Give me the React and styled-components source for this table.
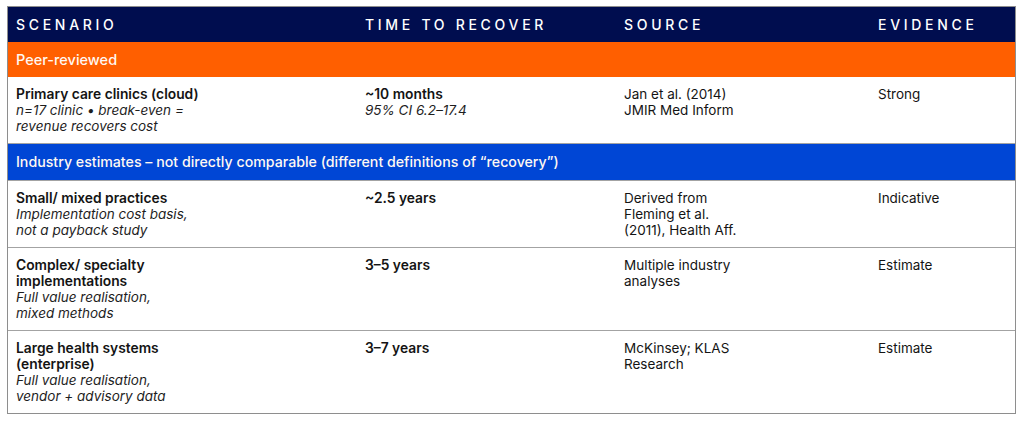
import React from "react";
import styled, { createGlobalStyle } from "styled-components";

const Global = createGlobalStyle`
  html, body { margin: 0; padding: 0; background: #ffffff; }
  body { font-family: Inter, "Noto Sans", Arial, sans-serif; color: #141414; }
`;

const Page = styled.div`
  padding: 6px 8px 0 7px;
`;

const Table = styled.div`
  width: 1009px;
  box-sizing: border-box;
  border: 1px solid #8e8e8e;
  display: flex;
  flex-direction: column;
`;

const Row = styled.div`
  display: grid;
  grid-template-columns: 349px 259px 254px 1fr;
  background: ${(p) => p.$bg || "#ffffff"};
  border-bottom: ${(p) => (p.$divider ? "1px solid #a3a3a3" : "none")};
  min-height: ${(p) => p.$minH || 0}px;
  box-sizing: border-box;
`;

const HeadCell = styled.div`
  padding: 9px 8px 9px;
  font-size: 14px;
  line-height: 17px;
  font-weight: 500;
  letter-spacing: 3.7px;
  color: #ffffff;
  text-transform: uppercase;
`;

const Band = styled.div`
  background: ${(p) => p.$bg};
  color: #fff8f2;
  font-size: ${(p) => p.$fs || 14.5}px;
  line-height: 17px;
  font-weight: 500;
  padding: 9px 8px 9px;
  height: ${(p) => p.$h}px;
  box-sizing: border-box;
  border-bottom: ${(p) => (p.$divider ? "1px solid #a3a3a3" : "none")};
`;

const Cell = styled.div`
  padding: 9px 8px 9px;
  font-size: 13.5px;
  line-height: 16px;
  color: #141414;
`;

const Title = styled.div`
  font-weight: 600;
  font-size: 13.8px;
`;

const Note = styled.div`
  font-style: italic;
  color: #1e1e1e;
`;

const rows = [
  {
    title: ["Primary care clinics (cloud)"],
    note: ["n=17 clinic • break-even =", "revenue recovers cost"],
    time: "~10 months",
    timeNote: "95% CI 6.2–17.4",
    source: ["Jan et al. (2014)", "JMIR Med Inform"],
    evidence: "Strong",
    h: 66,
  },
];

const rows2 = [
  {
    title: ["Small/ mixed practices"],
    note: ["Implementation cost basis,", "not a payback study"],
    time: "~2.5 years",
    source: ["Derived from", "Fleming et al.", "(2011), Health Aff."],
    evidence: "Indicative",
    h: 67,
  },
  {
    title: ["Complex/ specialty", "implementations"],
    note: ["Full value realisation,", "mixed methods"],
    time: "3–5 years",
    source: ["Multiple industry", "analyses"],
    evidence: "Estimate",
    h: 83,
  },
  {
    title: ["Large health systems", "(enterprise)"],
    note: ["Full value realisation,", "vendor + advisory data"],
    time: "3–7 years",
    source: ["McKinsey; KLAS", "Research"],
    evidence: "Estimate",
    h: 82,
  },
];

const Lines = ({ items }) =>
  items.map((t, i) => (
    <React.Fragment key={i}>
      {t}
      {i < items.length - 1 && <br />}
    </React.Fragment>
  ));

const DataRow = ({ r, divider }) => (
  <Row $divider={divider} $minH={r.h}>
    <Cell>
      <Title>
        <Lines items={r.title} />
      </Title>
      <Note>
        <Lines items={r.note} />
      </Note>
    </Cell>
    <Cell>
      <Title>{r.time}</Title>
      {r.timeNote && <Note>{r.timeNote}</Note>}
    </Cell>
    <Cell>
      <Lines items={r.source} />
    </Cell>
    <Cell>{r.evidence}</Cell>
  </Row>
);

export default function App() {
  return (
    <>
      <Global />
      <Page>
        <Table>
          <Row $bg="#000d4f" $minH={35}>
            <HeadCell>Scenario</HeadCell>
            <HeadCell>Time to recover</HeadCell>
            <HeadCell>Source</HeadCell>
            <HeadCell>Evidence</HeadCell>
          </Row>
          <Band $bg="#ff5f00" $h={35}>Peer-reviewed</Band>
          {rows.map((r, i) => (
            <DataRow key={i} r={r} divider />
          ))}
          <Band $bg="#0046d5" $h={37} $fs={14.2} $divider>
            Industry estimates – not directly comparable (different definitions of “recovery”)
          </Band>
          {rows2.map((r, i) => (
            <DataRow key={i} r={r} divider={i < rows2.length - 1} />
          ))}
        </Table>
      </Page>
    </>
  );
}
